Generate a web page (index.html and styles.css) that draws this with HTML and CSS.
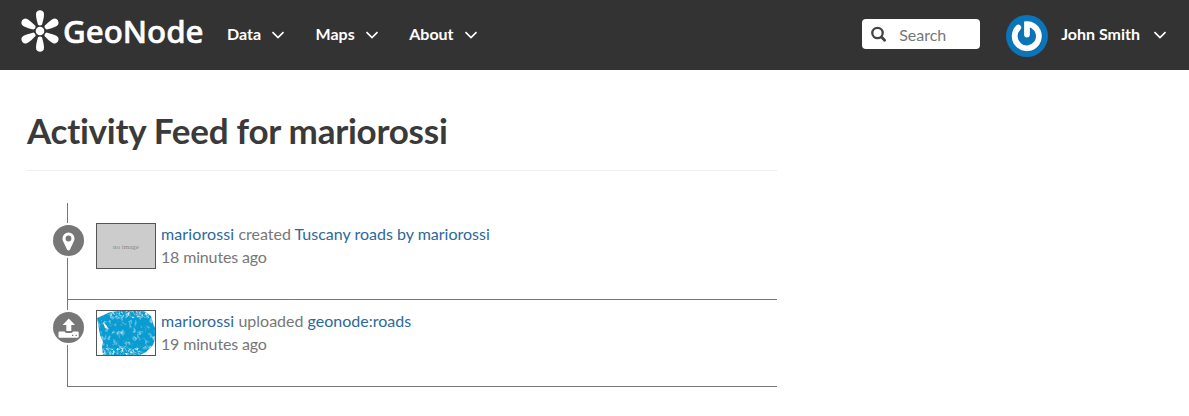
FILE: index.html
```html
<!DOCTYPE html>
<html lang="en">
<head>
<meta charset="utf-8">
<title>Activity Feed for mariorossi</title>
<link rel="stylesheet" href="styles.css">
</head>
<body>
<header class="navbar">
  <a class="brand" aria-label="GeoNode">
    <svg width="184" height="44" viewBox="0 0 184 44">
      <g fill="#fff" transform="translate(19 22)">
        <circle r="4.3"/>
        <g>
          <path id="petal" d="M-2-6.300C-2.800-9.500-4-13-4-17C-4-22 4-22 4-17C4-13 2.800-9.500 2-6.300Q0-4.800-2-6.300Z"/>
          <use href="#petal" transform="rotate(60)"/>
          <use href="#petal" transform="rotate(120)"/>
          <use href="#petal" transform="rotate(180)"/>
          <use href="#petal" transform="rotate(240)"/>
          <use href="#petal" transform="rotate(300)"/>
        </g>
      </g>
      <text class="brand-text" x="42" y="34" textLength="140.500" lengthAdjust="spacingAndGlyphs">GeoNode</text>
    </svg>
  </a>
  <nav class="menu">
    <a class="menu-item">Data <svg class="chevron" width="14" height="8" viewBox="0 0 14 8"><path d="M1.500 1.200L7 6.500L12.500 1.200"/></svg></a>
    <a class="menu-item">Maps <svg class="chevron" width="14" height="8" viewBox="0 0 14 8"><path d="M1.500 1.200L7 6.500L12.500 1.200"/></svg></a>
    <a class="menu-item">About <svg class="chevron" width="14" height="8" viewBox="0 0 14 8"><path d="M1.500 1.200L7 6.500L12.500 1.200"/></svg></a>
  </nav>
  <div class="search">
    <svg width="16" height="16" viewBox="0 0 16 16" fill="none" stroke="#444"><circle cx="6.500" cy="7" r="5.200" stroke-width="2.300"/><path d="M10.500 11L13.600 14.200" stroke-width="2.800" stroke-linecap="round"/></svg>
    <span>Search</span>
  </div>
  <svg class="avatar" width="42" height="42" viewBox="0 0 42 42">
    <circle cx="21" cy="21" r="21" fill="#0b75b9"/>
    <g fill="none" stroke-linecap="round" stroke-width="5.800">
      <g stroke="#07599a" opacity=".5" transform="translate(.8 .8)"><path d="M12.300 12.600A12.100 12.100 0 1 0 27 10.800Q24.500 9 21 9.200V19.500"/></g>
      <g stroke="#fff"><path d="M12.300 12.600A12.100 12.100 0 1 0 27 10.800Q24.500 9 21 9.200V19.500"/></g>
    </g>
  </svg>
  <a class="menu-item user">John Smith <svg class="chevron" width="14" height="8" viewBox="0 0 14 8"><path d="M1.500 1.200L7 6.500L12.500 1.200"/></svg></a>
</header>
<main class="content">
  <h1 class="title">Activity Feed for mariorossi</h1>
  <ul class="feed">
    <li class="entry first">
      <span class="badge">
        <svg width="31" height="31" viewBox="0 0 31 31"><path fill="#fff" fill-rule="evenodd" d="M15.500 7.500A6 6 0 0 0 9.500 13.500C9.500 15 10 16 10.500 17L14 24.500Q15.500 26.500 17 24.500L20.500 17C21 16 21.500 15 21.500 13.500A6 6 0 0 0 15.500 7.500ZM15.500 10.600A2.900 2.900 0 1 1 15.500 16.400A2.900 2.900 0 1 1 15.500 10.600Z"/></svg>
      </span>
      <div class="thumb placeholder">no image</div>
      <div class="info">
        <div><a class="actor">mariorossi</a> created <a>Tuscany roads by mariorossi</a></div>
        <div class="time">18 minutes ago</div>
      </div>
    </li>
    <li class="entry">
      <span class="badge">
        <svg width="31" height="31" viewBox="0 0 31 31"><path fill="#fff" d="M15.800 6.500L22 13H18.300V19H13.300V13H9.600Z"/><path fill="#fff" fill-rule="evenodd" d="M6.500 19.500H11.500Q12.500 21 14 21H17.600Q19 21 20 19.500H24.500Q25.700 19.500 25.700 20.500V24.800Q25.700 25.800 24.500 25.800H6.500Q5.500 25.800 5.500 24.800V20.500Q5.500 19.500 6.500 19.500ZM19 22.700V23.900H20.300V22.700ZM22.500 22.700V23.900H23.800V22.700Z"/></svg>
      </span>
      <div class="thumb">
        <svg width="58" height="44" viewBox="0 0 58 44">
          <defs>
            <clipPath id="area"><path d="M0 7L12 1.500L20 0H47L54 5L56 12L58 17V28L56 34L49 41L43 44H6L5 36L6 31L3 24Z"/></clipPath>
            <filter id="specks" x="0" y="0" width="100%" height="100%" color-interpolation-filters="sRGB">
              <feTurbulence type="fractalNoise" baseFrequency=".25 .2" numOctaves="4" seed="8"/>
              <feColorMatrix values="0 0 0 0 1  0 0 0 0 1  0 0 0 0 1  0 0 0 2 -1.050"/>
            </filter>
            <filter id="edge-specks" x="0" y="0" width="100%" height="100%" color-interpolation-filters="sRGB">
              <feTurbulence type="fractalNoise" baseFrequency=".45" numOctaves="2" seed="3"/>
              <feColorMatrix values="0 0 0 0 1  0 0 0 0 1  0 0 0 0 1  0 0 0 2.500 -1.150"/>
            </filter>
          </defs>
          <g clip-path="url(#area)">
            <rect width="58" height="44" fill="#0a9bd0"/>
            <rect width="58" height="44" filter="url(#specks)"/>
            <rect x="12" width="40" height="7" filter="url(#edge-specks)"/>
            <rect x="4" y="37" width="40" height="7" filter="url(#edge-specks)"/>
            <path d="M6 11L10 15L11 18L8 17Z" fill="#fff"/>
          </g>
        </svg>
      </div>
      <div class="info">
        <div><a class="actor">mariorossi</a> uploaded <a>geonode:roads</a></div>
        <div class="time">19 minutes ago</div>
      </div>
    </li>
  </ul>
</main>
</body>
</html>
```
FILE: styles.css
```css
* { box-sizing: border-box; }
body {
  margin: 0;
  background: #fff;
  color: #777;
  font: 16px/23px Lato, sans-serif;
}
.navbar {
  display: flex;
  align-items: center;
  height: 70px;
  padding: 0 22px 0 21px;
  background: #333;
}
.brand { display: flex; margin-bottom: 8px; }
.brand-text { fill: #fff; font: 500 31px "Noto Sans", sans-serif; stroke: #fff; stroke-width: .6px; }
.menu { display: flex; gap: 30.5px; margin-left: 22px; }
.menu-item {
  display: flex;
  align-items: center;
  gap: 10px;
  margin-bottom: 4px;
  color: #fff;
  font-weight: 700;
  white-space: nowrap;
}
.chevron { fill: none; stroke: #fff; stroke-width: 1.7; margin-top: 3px; }
.search {
  display: flex;
  align-items: center;
  gap: 12px;
  width: 118px;
  height: 30px;
  margin: 0 26px 2px auto;
  padding-left: 9px;
  border-radius: 4px;
  background: #fff;
}
.avatar { margin: 2px 13px 0 0; }
.user { gap: 13px; }
.content { width: 750px; margin-left: 27px; }
.title {
  height: 101px;
  margin: 0;
  padding-top: 40px;
  border-bottom: 1px solid #eee;
  color: #3a3a3a;
  font-size: 35px;
  line-height: 40px;
  font-weight: 700;
  font-variant-ligatures: none;
  letter-spacing: -.25px;
}
.feed { margin: 32px 0 0 40px; padding: 0; list-style: none; }
.entry {
  display: flex;
  height: 87px;
  padding-top: 10px;
  border-left: 1px solid #777;
  border-bottom: 1px solid #777;
}
.first { height: 97px; padding-top: 20px; }
.badge {
  flex: none;
  width: 35px;
  height: 35px;
  margin: 0 10px 0 -17px;
  border: 2px solid #fff;
  border-radius: 50%;
  background: #fff;
}
.badge svg { display: block; border-radius: 50%; background: #777; }
.thumb {
  flex: none;
  width: 60px;
  height: 46px;
  border: 1px solid #555;
}
.thumb svg { display: block; }
.placeholder {
  background: #ccc;
  color: #888;
  font: 7px/47px "Liberation Serif", serif;
  text-align: center;
}
.info { margin: -1px 0 0 5px; }
.info a { color: #2c689c; }
.info .actor { letter-spacing: .12px; }
.time { letter-spacing: -.16px; }
```
